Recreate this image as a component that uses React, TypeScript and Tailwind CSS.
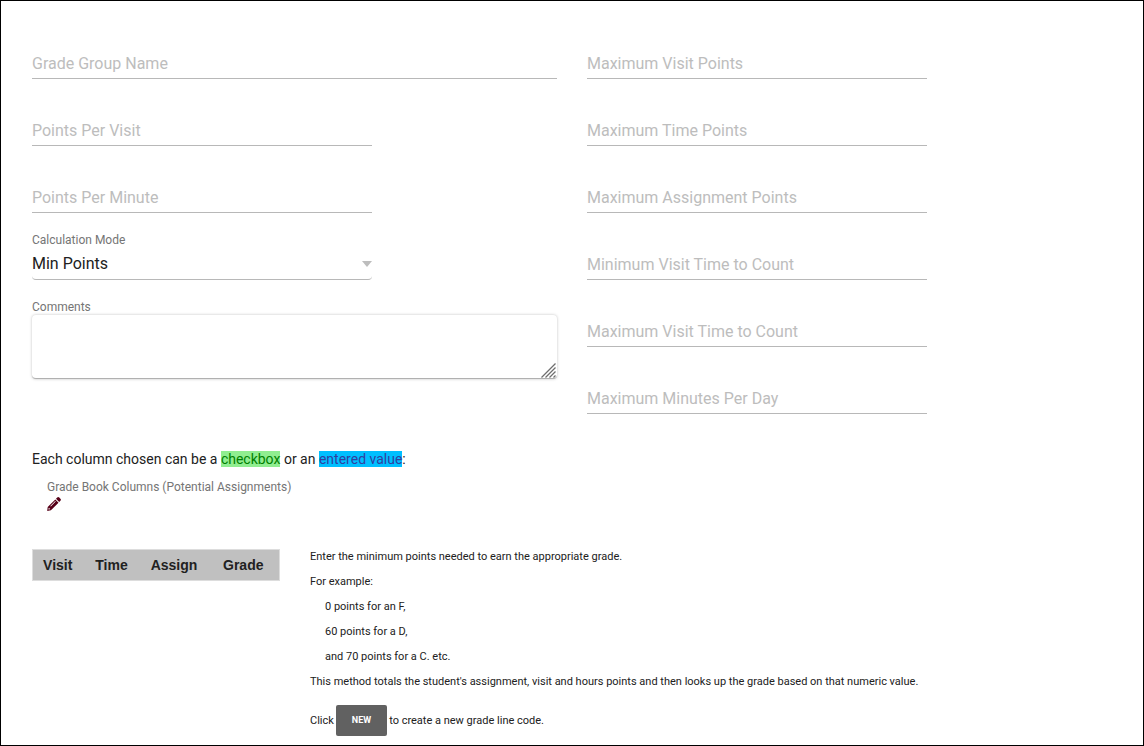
import React, { useState } from "react";

const MAX_FIELDS = [
  { id: "maxVisitPoints", label: "Maximum Visit Points" },
  { id: "maxTimePoints", label: "Maximum Time Points" },
  { id: "maxAssignmentPoints", label: "Maximum Assignment Points" },
  { id: "minVisitTime", label: "Minimum Visit Time to Count" },
  { id: "maxVisitTime", label: "Maximum Visit Time to Count" },
  { id: "maxMinutesPerDay", label: "Maximum Minutes Per Day" },
];

const EXAMPLES = ["0 points for an F,", "60 points for a D,", "and 70 points for a C. etc."];

function TextField({ id, label, wide = false }: { id: string; label: string; wide?: boolean }) {
  const [value, setValue] = useState("");

  return (
    <div className={wide ? "pt-9" : "pt-9 max-w-[340px]"}>
      <input
        id={id}
        type="text"
        aria-label={label}
        placeholder={label}
        value={value}
        onChange={(e) => setValue(e.target.value)}
        className="block w-full h-[31px] border-b border-[#b8b8b8] text-base text-[#212121] placeholder:text-[#bdbdbd] focus:outline-none focus:border-[#616161]"
      />
    </div>
  );
}

function CalculationMode() {
  const [mode, setMode] = useState("min");

  return (
    <div className="pt-5 max-w-[340px]">
      <label htmlFor="calcMode" className="block text-xs leading-[15px] text-[#757575]">Calculation Mode</label>
      <div className="relative">
        <select
          id="calcMode"
          value={mode}
          onChange={(e) => setMode(e.target.value)}
          className="block w-full h-8 appearance-none rounded border-b border-[#b8b8b8] bg-white text-base text-[#212121] focus:outline-none"
        >
          <option value="min">Min Points</option>
          <option value="percent">Percent</option>
        </select>
        <svg className="absolute right-0 top-[13px] pointer-events-none" width="10" height="6" viewBox="0 0 10 6">
          <path d="M0 0h10L5 6z" fill="#bdbdbd" />
        </svg>
      </div>
    </div>
  );
}

function Comments() {
  return (
    <div className="pt-5">
      <label htmlFor="comments" className="block text-xs leading-[15px] text-[#757575]">Comments</label>
      <div className="relative">
        <textarea
          id="comments"
          className="block w-full h-16 resize-none rounded border-b border-[#b0b0b0] bg-white p-2 text-base text-[#212121] shadow-[0_0_3px_rgba(0,0,0,0.25)] focus:outline-none"
        />
        <svg className="absolute right-px bottom-px pointer-events-none" width="15" height="15" viewBox="0 0 15 15">
          <path d="M.5 14.5l14-14M4.5 14.5l10-10M8.5 14.5l6-6M12.5 14.5l2-2" stroke="#6e6e6e" strokeWidth="1.3" fill="none" />
        </svg>
      </div>
    </div>
  );
}

function PencilIcon() {
  return (
    <svg width="14" height="14" viewBox="0 0 14 14" fill="#560018">
      <path
        fillRule="evenodd"
        d="M10.2.6a1.5 1.5 0 0 1 2.1 0l1.1 1.1a1.5 1.5 0 0 1 0 2.1L12.2 5 9 1.8zM8.3 2.5l3.2 3.2-7.6 7.6L.2 13.9l.5-3.8zM8.2 4.1L3.3 9l.5.5 4.9-4.9zM1.7 10.9l-.3 1.7 1.7-.3v-.9h-.9v-.7z"
      />
    </svg>
  );
}

function GradeTable() {
  return (
    <table className="border-collapse border border-[#dddddd] bg-[#c0c0c0] font-['Liberation_Sans',Arial,sans-serif] text-sm font-bold text-[#212121]">
      <thead>
        <tr className="h-[31px]">
          <th scope="col" className="w-[50px]">Visit</th>
          <th scope="col" className="w-[58px]">Time</th>
          <th scope="col" className="w-[67px]">Assign</th>
          <th scope="col" className="w-[72px]">Grade</th>
        </tr>
      </thead>
    </table>
  );
}

export default function App() {
  return (
    <main className="min-h-screen border border-black bg-white px-[31px] pt-[11px] pb-2 font-[Roboto,sans-serif] text-[#212121]">
      <form onSubmit={(e) => e.preventDefault()}>
        <div className="grid grid-cols-2 gap-x-[30px]">
          <div>
            <TextField id="groupName" label="Grade Group Name" wide />
            <TextField id="pointsPerVisit" label="Points Per Visit" />
            <TextField id="pointsPerMinute" label="Points Per Minute" />
            <CalculationMode />
            <Comments />
          </div>
          <div>
            {MAX_FIELDS.map((f) => (
              <TextField key={f.id} id={f.id} label={f.label} />
            ))}
          </div>
        </div>

        <p className="mt-[35px] text-sm leading-5">
          Each column chosen can be a <span className="bg-[#90ee90] text-[#008000]">checkbox</span> or an{" "}
          <span className="bg-[#00bfff] text-[#303f9f]">entered value</span>:
        </p>
        <div className="mt-[10px] pl-[15px]">
          <div className="text-xs leading-4 text-[#757575]">Grade Book Columns (Potential Assignments)</div>
          <button type="button" aria-label="Edit grade book columns" className="mt-0.5 block cursor-pointer">
            <PencilIcon />
          </button>
        </div>

        <div className="mt-[38px] flex items-start gap-[30px]">
          <GradeTable />
          <div className="text-[11px] leading-[15px]">
            <div className="flex flex-col gap-[10px]">
              <p>Enter the minimum points needed to earn the appropriate grade.</p>
              <p>For example:</p>
              {EXAMPLES.map((line) => (
                <p key={line} className="pl-[15px]">{line}</p>
              ))}
              <p>This method totals the student's assignment, visit and hours points and then looks up the grade based on that numeric value.</p>
            </div>
            <div className="mt-4 flex items-center gap-0.5">
              <span>Click</span>
              <button type="button" className="h-[31px] cursor-pointer rounded-xs bg-[#616161] px-4 text-[9px] font-bold text-white">NEW</button>
              <span>to create a new grade line code.</span>
            </div>
          </div>
        </div>
      </form>
    </main>
  );
}
